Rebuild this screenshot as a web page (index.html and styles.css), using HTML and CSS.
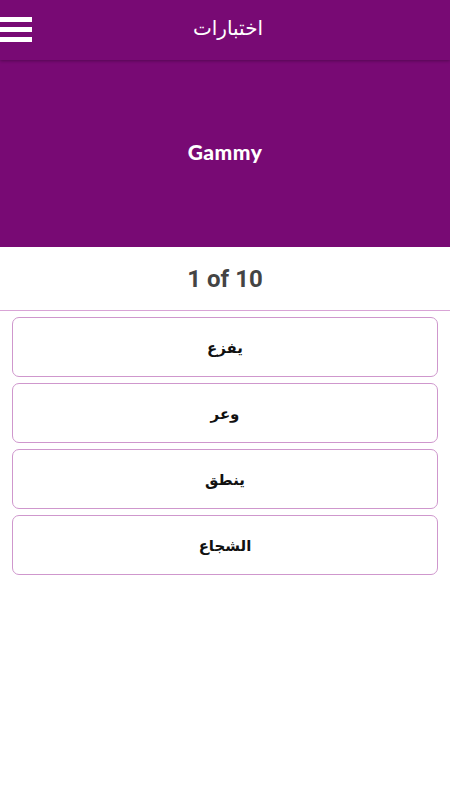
FILE: index.html
```html
<!DOCTYPE html>
<html lang="ar">
<head>
<meta charset="utf-8">
<link rel="stylesheet" href="styles.css">
</head>
<body>
<header class="topbar">
  <div class="menu"><span></span><span></span><span></span></div>
  <div class="title">اختبارات</div>
</header>
<section class="hero"><h1 class="brand">Gammy</h1></section>
<div class="counter">1 of 10</div>
<div class="options">
  <div class="option">يفزع</div>
  <div class="option">وعر</div>
  <div class="option">ينطق</div>
  <div class="option">الشجاع</div>
</div>
</body>
</html>
```
FILE: styles.css
```css
html, body { margin: 0; padding: 0; background: #fff; }
body { font-family: "Noto Sans", "DejaVu Sans", sans-serif; }
.topbar {
  height: 60px;
  box-sizing: border-box;
  padding-bottom: 5px;
  background: #780a74;
  position: relative;
  z-index: 2;
  display: flex;
  align-items: center;
  justify-content: center;
  box-shadow: 0 1px 3px rgba(0,0,0,0.3);
}
.menu {
  position: absolute;
  left: 0;
  top: 17px;
  width: 32px;
  display: flex;
  flex-direction: column;
  gap: 5px;
}
.menu span { display: block; height: 5px; background: #fff; }
.title {
  color: #fff;
  font-size: 20px;
  font-family: "Noto Sans", "DejaVu Sans", sans-serif;
  margin-left: 6px;
}
.hero {
  height: 187px;
  background: #780a74;
  display: flex;
  align-items: center;
  justify-content: center;
}
.brand {
  margin: 0 0 4px 0;
  color: #fff;
  font-family: "Lato", sans-serif;
  font-weight: 900;
  font-size: 21px;
  letter-spacing: 0.5px;
}
.counter {
  height: 63px;
  border-bottom: 1px solid #d9a4d6;
  display: flex;
  align-items: center;
  justify-content: center;
  font-family: Roboto, sans-serif;
  font-weight: 700;
  font-size: 24px;
  color: #444;
}
.options {
  padding: 6px 12px 0 12px;
  display: flex;
  flex-direction: column;
  gap: 6px;
}
.option {
  height: 58px;
  border: 1px solid #cf97cd;
  border-radius: 7px;
  display: flex;
  align-items: center;
  justify-content: center;
  font-family: "Noto Sans", "DejaVu Sans", sans-serif;
  font-weight: 700;
  font-size: 15px;
  color: #111;
}
```
